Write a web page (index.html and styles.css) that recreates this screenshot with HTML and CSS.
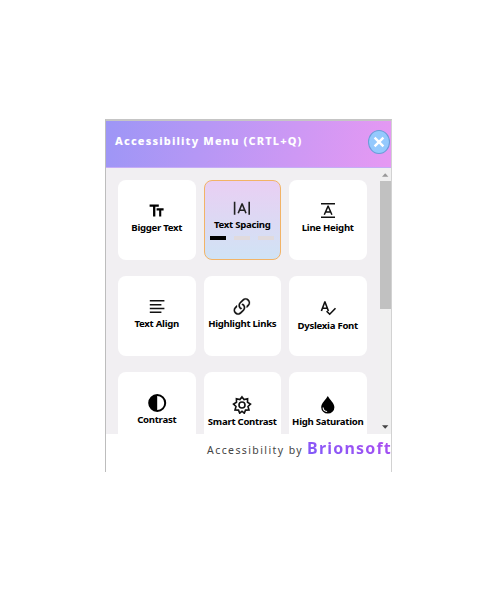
FILE: index.html
```html
<!DOCTYPE html>
<html lang="en">
<head>
<meta charset="utf-8">
<title>Accessibility Menu</title>
<link rel="stylesheet" href="styles.css">
</head>
<body>
<div class="panel">
  <header class="header">
    <h1 class="title">Accessibility Menu (CRTL+Q)</h1>
    <button class="close" aria-label="Close"><svg width="12" height="12" viewBox="0 0 12 12"><path d="M1.6 1.6 10.4 10.4M10.4 1.6 1.6 10.4" stroke="#fff" stroke-width="2.4"/></svg></button>
  </header>
  <main class="body">
    <div class="grid">
      <div class="card">
        <svg class="icon" viewBox="0 0 20 20"><path d="M2.6 5.6h9.2M7.2 5v11.4" stroke="#000" stroke-width="2.3"/><path d="M9.6 9.4h7M13.2 9v7.4" stroke="#000" stroke-width="2.1"/></svg>
        <span class="label">Bigger Text</span>
      </div>
      <div class="card active">
        <svg class="icon" viewBox="0 0 20 20"><path d="M2.6 3.8v13M17.2 3.8v13" stroke="#222" stroke-width="1.6"/><path d="M6.2 15.3 10 6h.2L14 15.3M7.6 12.2h5" fill="none" stroke="#222" stroke-width="1.6"/></svg>
        <span class="label">Text Spacing</span>
        <div class="steps"><i class="step on"></i><i class="step"></i><i class="step"></i></div>
      </div>
      <div class="card">
        <svg class="icon" viewBox="0 0 20 20"><path d="M3 3.7h14M3 17.2h14" stroke="#111" stroke-width="1.5"/><path d="M6.3 14.8 10 6.2h.2L13.9 14.8M7.7 12h4.8" fill="none" stroke="#111" stroke-width="1.5"/></svg>
        <span class="label">Line Height</span>
      </div>
      <div class="card">
        <svg class="icon" viewBox="0 0 20 20"><path d="M2.8 4.8h14.6M2.8 8.7h11.6M2.8 12.5h14.6M2.8 16.2h11.6" stroke="#111" stroke-width="1.5"/></svg>
        <span class="label">Text Align</span>
      </div>
      <div class="card">
        <svg class="icon" viewBox="0 0 20 20"><g transform="translate(-2 -.6) scale(1.48)" fill="#111" stroke="#111" stroke-width=".15"><path d="M4.715 6.542 3.343 7.914a3 3 0 1 0 4.243 4.243l1.828-1.829A3 3 0 0 0 8.586 5.5L8 6.086a1 1 0 0 0-.154.199 2 2 0 0 1 .861 3.337L6.88 11.45a2 2 0 1 1-2.83-2.83l.793-.792a4 4 0 0 1-.128-1.287z"/><path d="M6.586 4.672A3 3 0 0 0 7.414 9.5l.775-.776a2 2 0 0 1-.896-3.346L9.12 3.55a2 2 0 1 1 2.83 2.83l-.793.792c.112.42.155.855.128 1.287l1.372-1.372a3 3 0 1 0-4.243-4.243z"/></g></svg>
        <span class="label">Highlight Links</span>
      </div>
      <div class="card low">
        <svg class="icon" viewBox="0 0 20 20"><path d="M3.4 13 6.8 4h.2L10.4 13M4.6 10.2h4.6" fill="none" stroke="#111" stroke-width="1.6"/><path d="m8.6 13.1 3.1 3.1 5.8-6" fill="none" stroke="#111" stroke-width="1.6"/></svg>
        <span class="label">Dyslexia Font</span>
      </div>
      <div class="card">
        <svg class="icon" viewBox="0 0 20 20"><circle cx="10.2" cy="11" r="8" fill="#fff" stroke="#000" stroke-width="2"/><path d="M10.2 3a8 8 0 0 0 0 16z"/></svg>
        <span class="label">Contrast</span>
      </div>
      <div class="card low">
        <svg class="icon" viewBox="0 0 20 20"><g fill="none" stroke="#111" stroke-width="1.6" stroke-linejoin="miter"><path d="m10 2.9 2.1 2.7 3.5-.9-.1 3.5 3 1.9-2.5 2.4 1 3.4-3.5.2-1.2 3.1-2.3-2-2.3 2-1.2-3.1-3.5-.2 1-3.4-2.5-2.4 3-1.9-.1-3.5 3.5.9z"/><circle cx="10" cy="11" r="3"/></g></svg>
        <span class="label">Smart Contrast</span>
      </div>
      <div class="card low">
        <svg class="icon" viewBox="0 0 20 20"><path d="M9.8 2C8 5.5 3.2 9.3 3.2 13.2a6.6 6.4 0 0 0 13.2 0C16.4 9.3 11.6 5.5 9.8 2z"/><path d="M5.1 13.5a4.4 4.2 0 0 0 4 4" fill="none" stroke="#fff" stroke-width="1.1"/></svg>
        <span class="label">High Saturation</span>
      </div>
    </div>
    <div class="scrollbar">
      <svg width="11" height="13" viewBox="0 0 11 13"><path d="M2 8.8 5.2 5.2 8.4 8.8z" fill="#999"/></svg>
      <div class="thumb"></div>
      <svg width="11" height="13" viewBox="0 0 11 13"><path d="M2 4.2h6.4L5.2 7.8z" fill="#444"/></svg>
    </div>
  </main>
  <footer class="footer"><span class="by">Accessibility by</span><span class="brand">Brionsoft</span></footer>
</div>
</body>
</html>
```
FILE: styles.css
```css
* { box-sizing: border-box; }
body {
  margin: 0;
  padding: 119px 0 0 105px;
  background: #fff;
  font-family: "Noto Sans", "Open Sans", sans-serif;
}
.panel {
  width: 287px;
  height: 353px;
  border-top: 2px solid #c5c5c5;
  border-left: 1px solid #bdbdbd;
  border-right: 1px solid #d2d2d2;
  background: #fff;
}
.header {
  display: flex;
  align-items: flex-start;
  justify-content: space-between;
  height: 47px;
  padding: 9px 1px 0 9px;
  border-bottom: 1px solid #c5acf6;
  background: linear-gradient(100deg, #9d96f6, #e699f3);
}
.title {
  margin: 3px 0 0;
  color: #fff;
  font-size: 11px;
  line-height: 16px;
  font-weight: 800;
  letter-spacing: 1.15px;
  white-space: nowrap;
}
.close {
  display: flex;
  align-items: center;
  justify-content: center;
  width: 22px;
  height: 24px;
  padding: 0;
  border: 1px solid #6b9cd8;
  border-radius: 50%;
  background: #94c9fd;
}
.body {
  display: flex;
  justify-content: space-between;
  height: 266px;
  overflow: hidden;
  background: #f1eff2;
}
.grid {
  display: grid;
  grid-template-columns: repeat(3, 77.5px);
  grid-auto-rows: 80px;
  gap: 16px 8px;
  padding: 12px 0 0 12px;
}
.card {
  display: flex;
  flex-direction: column;
  align-items: center;
  padding-top: 20px;
  border-radius: 8px;
  background: #fff;
}
.card.low { padding-top: 22px; }
.card.active {
  padding-top: 17px;
  border: 1px solid #f2b366;
  background: linear-gradient(#e9cff3, #d0e3f5);
}
.icon { flex: none; width: 20px; height: 20px; }
.label {
  color: #000;
  font-size: 9.6px;
  line-height: 16px;
  font-weight: 700;
  letter-spacing: -0.28px;
  white-space: nowrap;
}
.card.active .label { margin-top: -1px; }
.steps { display: flex; gap: 8px; margin-top: 3px; }
.step { width: 16px; height: 4px; background: #e0dadd; }
.step.on { background: #000; }
.scrollbar {
  display: flex;
  flex-direction: column;
  width: 11px;
  background: #f0f0f0;
}
.scrollbar svg { flex: none; }
.scrollbar svg:last-child { margin-top: auto; }
.thumb { height: 128px; background: #c1c1c1; }
.footer {
  display: flex;
  justify-content: flex-end;
  align-items: baseline;
  gap: 4px;
  height: 38px;
  padding-top: 2px;
  white-space: nowrap;
}
.by { color: #444; font-size: 10.5px; letter-spacing: 1.4px; }
.brand {
  color: transparent;
  background: linear-gradient(20deg, #7a5cfa, #b34bee);
  background-clip: text;
  -webkit-background-clip: text;
  font-size: 16px;
  line-height: 24px;
  font-weight: 700;
  letter-spacing: 1.2px;
  margin-right: -1px;
}
```
